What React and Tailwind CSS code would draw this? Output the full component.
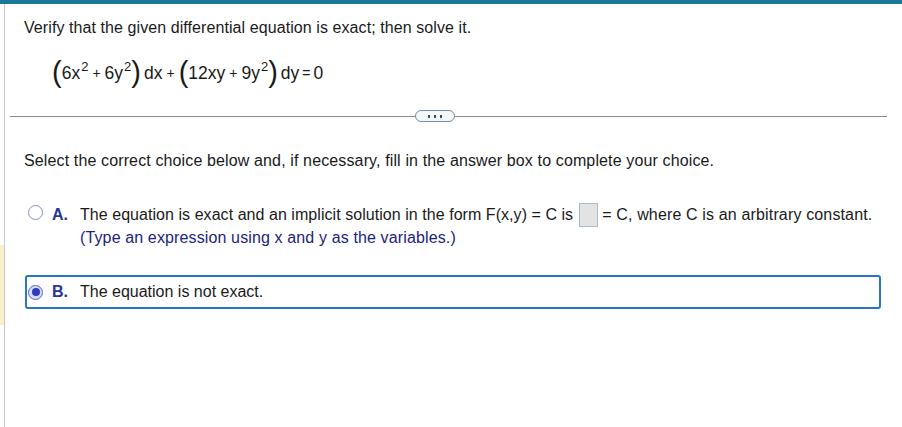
import React from "react";

const Radio = ({ checked }) => (
  <span
    className={
      "w-[15px] h-[15px] rounded-full border-[1.5px] flex items-center justify-center shrink-0 " +
      (checked ? "border-[#5a67c8] bg-[#d9ddf5]" : "border-[#8a93c9] bg-white")
    }
  >
    {checked && <span className="w-[8px] h-[8px] rounded-full bg-[#2d3bc4]" />}
  </span>
);

const Paren = ({ children }) => (
  <span className="text-[29px] leading-none font-light relative -top-[1px]">{children}</span>
);

const Sup = () => <sup className="text-[13px] leading-none relative -top-[7px] ml-[1px]">2</sup>;

export default function App() {
  return (
    <div
      className="w-[902px] h-[427px] bg-white text-[#1a1a1a] overflow-hidden"
      style={{ fontFamily: '"Liberation Sans", Arial, sans-serif' }}
    >
      <div className="h-[4px] bg-[#1b7896]" />
      <div className="flex">
        <div className="w-[4px] shrink-0">
          <div className="h-[241px]" />
          <div className="h-[80px] bg-[#fbf0cc]" />
        </div>
        <div className="flex-1 border-l border-[#c8c8c8] h-[423px]">
          <div className="pl-[19px] pt-[14px] text-[16px] leading-[20px] tracking-[0.08px]">
            Verify that the given differential equation is exact; then solve it.
          </div>
          <div className="pl-[47px] mt-[20px] text-[17.5px] flex items-center h-[30px]">
            <Paren>(</Paren>
            <span>6x</span>
            <Sup />
            <span className="mx-[4px] text-[14px]">+</span>
            <span>6y</span>
            <Sup />
            <Paren>)</Paren>
            <span className="ml-[3px]">dx</span>
            <span className="mx-[4px] text-[14px]">+</span>
            <Paren>(</Paren>
            <span>12xy</span>
            <span className="mx-[4px] text-[14px]">+</span>
            <span>9y</span>
            <Sup />
            <Paren>)</Paren>
            <span className="ml-[3px]">dy</span>
            <span className="mx-[3px] text-[14px]">=</span>
            <span>0</span>
          </div>
          <div className="relative ml-[5px] mr-[15px] mt-[22px] h-[12px] flex items-center">
            <div className="w-full border-t border-[#8a8a8a]" />
            <div className="absolute left-[405px] top-0 w-[40px] h-[12px] rounded-full border border-[#7c8a99] bg-[#f4f7fa] flex items-center justify-center gap-[4px]">
              <span className="w-[2px] h-[3px] bg-[#3b4a5a]" />
              <span className="w-[2px] h-[3px] bg-[#3b4a5a]" />
              <span className="w-[2px] h-[3px] bg-[#3b4a5a]" />
            </div>
          </div>
          <div className="pl-[19px] pt-[29px] text-[16px] leading-[20px] tracking-[0.13px]">
            Select the correct choice below and, if necessary, fill in the answer box to complete your choice.
          </div>
          <div className="pl-[23px] pt-[32px] flex text-[16px] leading-[20px]">
            <div className="pt-[2px]">
              <Radio />
            </div>
            <span className="ml-[9px] font-bold text-[#2b3591] w-[28px] leading-[24px]">A.</span>
            <div>
              <div className="flex items-center h-[24px] tracking-[0.05px]">
                <span>The equation is exact and an implicit solution in the form F(x,y) = C is</span>
                <span className="ml-[6px] mr-[4px] w-[19px] h-[24px] bg-[#e3e3e3] border border-[#a9bccf]" />
                <span className="tracking-[0.15px]">= C, where C is an arbitrary constant.</span>
              </div>
              <div className="text-[#1c2380] mt-[1px] tracking-[0.13px]">
                (Type an expression using x and y as the variables.)
              </div>
            </div>
          </div>
          <div className="ml-[20px] mr-[21px] mt-[27px] h-[34px] border-2 border-[#2a76c4] rounded-[3px] flex items-center pl-[1px] text-[16px]">
            <Radio checked />
            <span className="ml-[9px] font-bold text-[#2b3591] w-[28px]">B.</span>
            <span>The equation is not exact.</span>
          </div>
        </div>
      </div>
    </div>
  );
}
